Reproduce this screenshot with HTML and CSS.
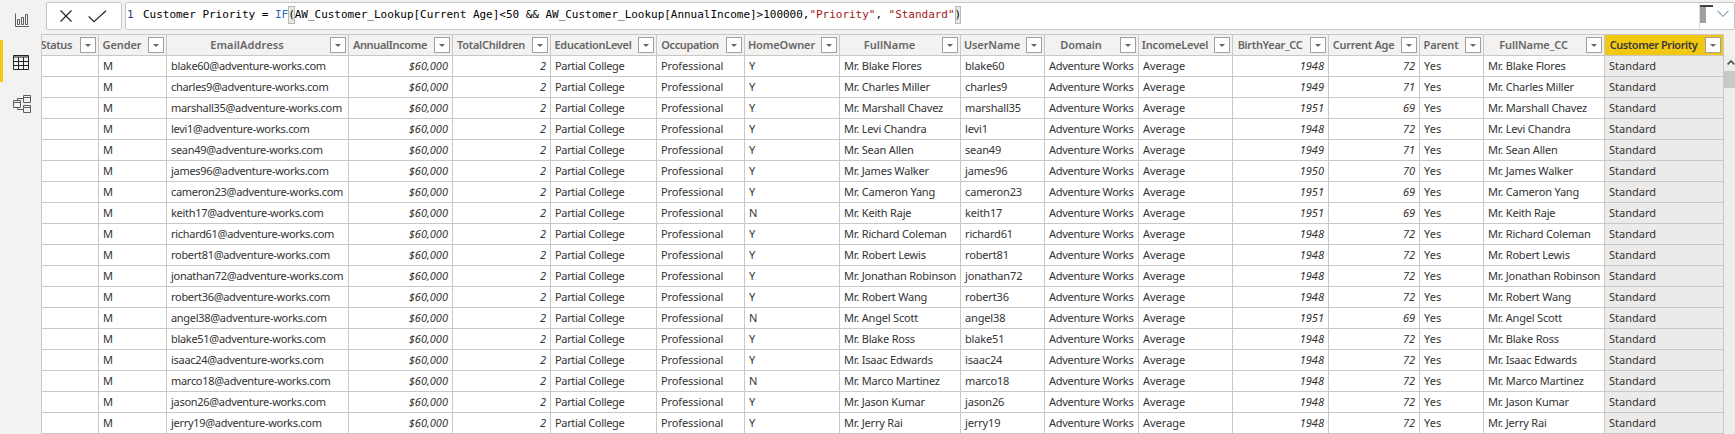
FILE: index.html
```html
<!DOCTYPE html>
<html lang="en">
<head>
<meta charset="utf-8">
<title>Customer Lookup</title>
<link rel="stylesheet" href="styles.css">
</head>
<body>
<div class="app">
  <nav class="rail">
    <div class="rail-item"><svg width="16" height="16" viewBox="0 0 16 16"><path d="M1.5 0.5V13.5H15M3.5 11.5V6.5H5.5V11.5ZM7.5 11.5V4.5H9.5V11.5ZM11.5 11.5V1.5H13.5V11.5Z"/></svg></div>
    <div class="rail-item active"><svg width="16" height="16" viewBox="0 0 16 16"><path d="M.5 .5H15.5V14.5H.5ZM.5 2H15.5M.5 6.5H15.5M.5 10.5H15.5M5.5 2V14.5M10.5 2V14.5"/></svg></div>
    <div class="rail-item"><svg width="18" height="18" viewBox="0 0 18 18"><path d="M10.5 .5H17.5V7.5H10.5ZM10.5 2.5H17.5M.5 5.5H7.5V12.5H.5ZM.5 7.5H7.5M10.5 10.5H17.5V17.5H10.5ZM10.5 12.5H17.5M4.5 5.5V3.5H10.5M4.5 12.5V14.5H10.5"/></svg></div>
  </nav>
  <main class="main">
    <div class="formula-row">
      <div class="actions">
        <svg width="12" height="12" viewBox="0 0 12 12"><path d="M.5 .5L11.5 11.5M11.5 .5L.5 11.5"/></svg>
        <svg width="19" height="13" viewBox="0 0 19 13"><path d="M.7 6.5L6 11.7L18 .7"/></svg>
      </div>
      <div class="formula">
        <span class="line-no">1</span>
        <code class="code">Customer Priority = <span class="fn">IF</span><span class="bracket">(</span>AW_Customer_Lookup[Current Age]&lt;50 &amp;&amp; AW_Customer_Lookup[AnnualIncome]&gt;100000,<span class="str">"Priority"</span>, <span class="str">"Standard"</span><span class="bracket">)</span></code>
        <div class="minimap"><i class="cursor-mark"></i><i class="slider"></i></div>
        <div class="expand"><svg width="12" height="8" viewBox="0 0 12 8"><path d="M.5 .8L6 6.5L11.5 .8"/></svg></div>
      </div>
    </div>
    <div class="grid-area">
      <table class="grid"><colgroup id="cols"></colgroup><thead><tr id="head"></tr></thead><tbody id="rows"></tbody></table>
      <div class="scrollbar"><svg width="8" height="5" viewBox="0 0 8 5"><path d="M.6 4.4L4 1L7.4 4.4"/></svg><div class="thumb"></div></div>
    </div>
  </main>
</div>
<script src="grid.js"></script>
</body>
</html>
```
FILE: styles.css
```css
* { box-sizing: border-box; }
body { margin: 0; background: #f3f2f1; font-family: "Noto Sans", sans-serif; font-size: 11px; color: #333; overflow: hidden; }
.app { display: flex; height: 434px; }
.rail { width: 41px; flex: none; }
.rail-item { height: 42px; display: flex; align-items: center; justify-content: center; padding-top: 2px; border-left: 3px solid transparent; }
.rail-item:first-child { height: 40px; }
.rail-item.active { padding: 3px 2px 0 0; }
.rail-item svg { fill: none; stroke: #605e5c; }
.rail-item.active { border-left-color: #f2c811; }
.rail-item.active svg { stroke: #252423; }
.main { flex: 1; min-width: 0; display: flex; flex-direction: column; }
.formula-row { height: 34px; flex: none; display: flex; gap: 3px; padding: 2px 0 4px 5px; }
.actions, .formula { border: 1px solid #c8c6c4; border-radius: 2px; background: #fff; }
.actions { width: 76px; display: flex; align-items: center; gap: 16px; padding-left: 13px; }
.actions svg { fill: none; stroke: #252423; stroke-width: 1.2; }
.formula { flex: 1; display: flex; font: 11px/17px "DejaVu Sans Mono", monospace; color: #000; }
.line-no { width: 17px; padding: 3px 0 0 1px; color: #1f3d70; }
.code { font: inherit; flex: 1; white-space: pre; padding-top: 3px; letter-spacing: -0.025px; }
.fn { color: #3165bb; }
.str { color: #a31515; }
.bracket { display: inline-block; height: 18px; background: #e4ebe2; box-shadow: inset 0 0 0 1px #b9b9b9; vertical-align: top; }
.minimap { width: 15px; border-left: 1px solid #ddd; padding-top: 2px; }
.cursor-mark { display: block; height: 2px; width: 13px; background: #424242; }
.slider { display: block; width: 6px; height: 16px; background: #a0a0a0; }
.expand { width: 20px; padding: 3px 0 0 3px; }
.expand svg { fill: none; stroke: #55718d; }
.grid-area { flex: 1; display: flex; min-height: 0; }
.grid { width: 1683px; flex: none; table-layout: fixed; border-collapse: separate; border-spacing: 0; border-top: 1px solid #c8c8c8; border-left: 1px solid #c8c8c8; background: #fff; }
.grid th, .grid td { height: 21px; padding: 0 4px 1px; border-right: 1px solid #c8c8c8; border-bottom: 1px solid #c8c8c8; overflow: hidden; white-space: nowrap; line-height: 19px; }
.grid th { padding: 0 2px 0 4px; background: #f3f2f1; color: #666; font-weight: 600; line-height: 18px; }
.head-cell { display: flex; align-items: center; }
.label { flex: 1; min-width: 0; display: flex; justify-content: center; padding: 0 7px 1px 0; }
.clipped .label { justify-content: flex-end; padding-right: 8px; }
.filter { flex: none; width: 16px; height: 16px; border: 1px solid #a0a0a0; background: #fff; display: flex; align-items: center; justify-content: center; }
.filter::after { content: ""; border: 3px solid transparent; border-top: 3px solid #666; border-bottom: 0; }
.num { text-align: right; font-style: italic; }
.grid th.selected { background: #f2c811; color: #3b3a39; }
.grid td.selected { background: #edebe9; }
.scrollbar { flex: 1; padding-top: 26px; display: flex; flex-direction: column; background: linear-gradient(#f3f2f1 21px, #eeeded 21px); overflow: hidden; }
.scrollbar svg { flex: none; margin-left: 3px; fill: none; stroke: #505050; stroke-width: 1.6; }
.thumb { height: 17px; margin-top: 6px; background: #c8c8c8; }
```
FILE: grid.js
```js
// name, width, header letter-spacing, body letter-spacing
const columns = [
  ['Status', 57, -0.4, 0], ['Gender', 68, -0.1, 0], ['EmailAddress', 182, 0.1, -0.3],
  ['AnnualIncome', 104, -0.35, 0], ['TotalChildren', 98, -0.25, 0], ['EducationLevel', 106, -0.3, -0.35],
  ['Occupation', 88, -0.4, -0.1], ['HomeOwner', 95, -0.1, 0], ['FullName', 121, 0, -0.2],
  ['UserName', 84, -0.1, -0.15], ['Domain', 94, -0.1, -0.3], ['IncomeLevel', 94, -0.15, 0],
  ['BirthYear_CC', 96, -0.35, 0], ['Current Age', 91, -0.3, 0], ['Parent', 64, -0.1, 0],
  ['FullName_CC', 121, -0.1, -0.2], ['Customer Priority', 119, -0.45, 0]
];
const numeric = new Set([3, 4, 12, 13]);
const people = [
  ['blake60', 'Blake Flores', 'Y', 1948], ['charles9', 'Charles Miller', 'Y', 1949],
  ['marshall35', 'Marshall Chavez', 'Y', 1951], ['levi1', 'Levi Chandra', 'Y', 1948],
  ['sean49', 'Sean Allen', 'Y', 1949], ['james96', 'James Walker', 'Y', 1950],
  ['cameron23', 'Cameron Yang', 'Y', 1951], ['keith17', 'Keith Raje', 'N', 1951],
  ['richard61', 'Richard Coleman', 'Y', 1948], ['robert81', 'Robert Lewis', 'Y', 1948],
  ['jonathan72', 'Jonathan Robinson', 'Y', 1948], ['robert36', 'Robert Wang', 'Y', 1948],
  ['angel38', 'Angel Scott', 'N', 1951], ['blake51', 'Blake Ross', 'Y', 1948],
  ['isaac24', 'Isaac Edwards', 'Y', 1948], ['marco18', 'Marco Martinez', 'N', 1948],
  ['jason26', 'Jason Kumar', 'Y', 1948], ['jerry19', 'Jerry Rai', 'Y', 1948]
];
document.getElementById('cols').innerHTML = columns.map(c => `<col style="width:${c[1]}px">`).join('');
document.getElementById('head').innerHTML = columns.map((c, i) =>
  `<th class="${i === 0 ? 'clipped' : i === 16 ? 'selected' : ''}" style="letter-spacing:${c[2]}px"><div class="head-cell"><span class="label"><span>${c[0]}</span></span><span class="filter"></span></div></th>`).join('');
document.getElementById('rows').innerHTML = people.map(([user, name, owner, year]) => {
  const cells = ['', 'M', user + '@adventure-works.com', '$60,000', 2, 'Partial College', 'Professional', owner,
    'Mr. ' + name, user, 'Adventure Works', 'Average', year, 2020 - year, 'Yes', 'Mr. ' + name, 'Standard'];
  return '<tr>' + cells.map((v, i) => `<td class="${numeric.has(i) ? 'num' : i === 16 ? 'selected' : ''}" style="letter-spacing:${columns[i][3]}px">${v}</td>`).join('') + '</tr>';
}).join('');
```
